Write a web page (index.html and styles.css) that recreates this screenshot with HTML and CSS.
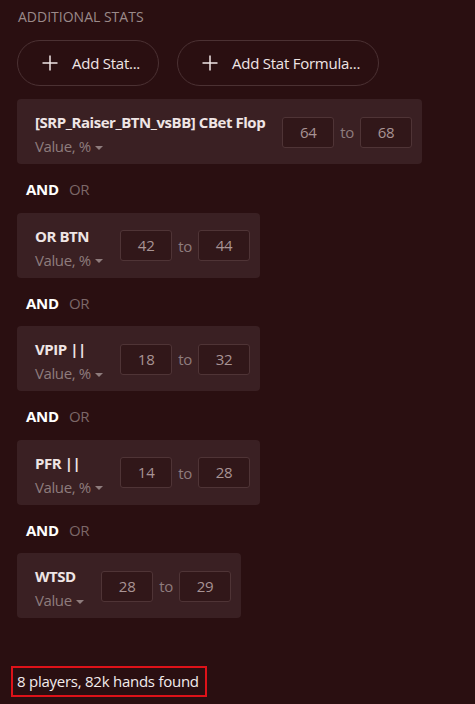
FILE: index.html
```html
<!DOCTYPE html>
<html lang="en">
<head>
  <meta charset="UTF-8" />
  <title>Additional stats</title>
  <link rel="stylesheet" href="styles.css">
</head>
<body>

  <h3 class="section-title">Additional Stats</h3>

  <div class="add-buttons">
    <button class="pill-btn">
      <svg class="plus" width="16" height="16" viewBox="0 0 16 16"><path d="M8 0.5v15M0.5 8h15" /></svg>
      Add Stat...
    </button>
    <button class="pill-btn">
      <svg class="plus" width="16" height="16" viewBox="0 0 16 16"><path d="M8 0.5v15M0.5 8h15" /></svg>
      Add Stat Formula...
    </button>
  </div>

  <div class="stat-list">
    <div class="stat-card">
      <div class="stat-name">
        <div class="stat-title">[SRP_Raiser_BTN_vsBB] CBet Flop</div>
        <div class="stat-type">Value, % <span class="caret"></span></div>
      </div>
      <div class="range">
        <div class="range-input">64</div>
        <span class="range-to">to</span>
        <div class="range-input">68</div>
      </div>
    </div>

    <div class="logic"><span class="on">AND</span><span class="off">OR</span></div>

    <div class="stat-card">
      <div class="stat-name">
        <div class="stat-title">OR BTN</div>
        <div class="stat-type">Value, % <span class="caret"></span></div>
      </div>
      <div class="range">
        <div class="range-input">42</div>
        <span class="range-to">to</span>
        <div class="range-input">44</div>
      </div>
    </div>

    <div class="logic"><span class="on">AND</span><span class="off">OR</span></div>

    <div class="stat-card">
      <div class="stat-name">
        <div class="stat-title">VPIP ||</div>
        <div class="stat-type">Value, % <span class="caret"></span></div>
      </div>
      <div class="range">
        <div class="range-input">18</div>
        <span class="range-to">to</span>
        <div class="range-input">32</div>
      </div>
    </div>

    <div class="logic"><span class="on">AND</span><span class="off">OR</span></div>

    <div class="stat-card">
      <div class="stat-name">
        <div class="stat-title">PFR ||</div>
        <div class="stat-type">Value, % <span class="caret"></span></div>
      </div>
      <div class="range">
        <div class="range-input">14</div>
        <span class="range-to">to</span>
        <div class="range-input">28</div>
      </div>
    </div>

    <div class="logic"><span class="on">AND</span><span class="off">OR</span></div>

    <div class="stat-card">
      <div class="stat-name">
        <div class="stat-title">WTSD</div>
        <div class="stat-type">Value <span class="caret"></span></div>
      </div>
      <div class="range">
        <div class="range-input">28</div>
        <span class="range-to">to</span>
        <div class="range-input">29</div>
      </div>
    </div>
  </div>

  <div class="found"><span class="found-box">8 players, 82k hands found</span></div>

</body>
</html>
```

FILE: styles.css
```css
html, body {
  height: 100%;
}
body {
  margin: 0;
  padding: 0 0 7px 17px;
  box-sizing: border-box;
  background: #2a0f11;
  color: #efe5e5;
  font-family: 'Open Sans', 'Noto Sans', sans-serif;
  font-size: 15px;
  letter-spacing: -0.25px;
  display: flex;
  flex-direction: column;
  align-items: flex-start;
}
.section-title {
  margin: 0;
  padding: 6px 0 0 1px;
  line-height: 22px;
  font-size: 14px;
  font-weight: 400;
  letter-spacing: 0;
  text-transform: uppercase;
  color: #9b8a8a;
}
.add-buttons {
  display: flex;
  gap: 18px;
  margin-top: 12px;
}
.pill-btn {
  display: flex;
  align-items: center;
  gap: 14px;
  height: 46px;
  padding: 0 18px 0 24px;
  border: 1px solid #4b3133;
  border-radius: 23px;
  background: transparent;
  color: #efe5e5;
  font-family: inherit;
  font-size: 15px;
  letter-spacing: -0.25px;
  cursor: pointer;
}
.plus {
  stroke: #efe5e5;
  stroke-width: 1.5;
  fill: none;
}
.stat-list {
  margin-top: 13px;
  display: flex;
  flex-direction: column;
  align-items: flex-start;
}
.stat-card {
  display: flex;
  gap: 17px;
  padding: 7px 10px 6px 18px;
  background: #3a2023;
  border-radius: 4px;
}
.stat-name {
  padding-top: 4px;
}
.stat-title {
  line-height: 24px;
  font-weight: 700;
  letter-spacing: -0.45px;
  white-space: nowrap;
}
.stat-type {
  line-height: 24px;
  color: #8e7c7d;
  letter-spacing: -0.4px;
  white-space: nowrap;
}
.caret {
  display: inline-block;
  margin-left: 1px;
  vertical-align: middle;
  border-left: 4px solid transparent;
  border-right: 4px solid transparent;
  border-top: 4px solid #8e7c7d;
}
.range {
  display: flex;
  align-items: center;
  gap: 6px;
}
.range-input {
  width: 50px;
  height: 29px;
  line-height: 29px;
  text-align: center;
  border: 1px solid #4f3436;
  border-radius: 3px;
  background: #311719;
  color: #a89394;
}
.range-to {
  color: #8e7c7d;
}
.logic {
  padding: 13px 0 11.5px 9px;
  line-height: 24px;
}
.logic .on {
  font-weight: 700;
  color: #ffffff;
}
.logic .off {
  margin-left: 10px;
  color: #7c6768;
}
.found {
  margin: auto 0 0 -6px;
}
.found-box {
  display: inline-block;
  padding: 0 6px 0 4px;
  line-height: 27px;
  border: 2px solid #de1219;
  color: #f3ecec;
}
```
